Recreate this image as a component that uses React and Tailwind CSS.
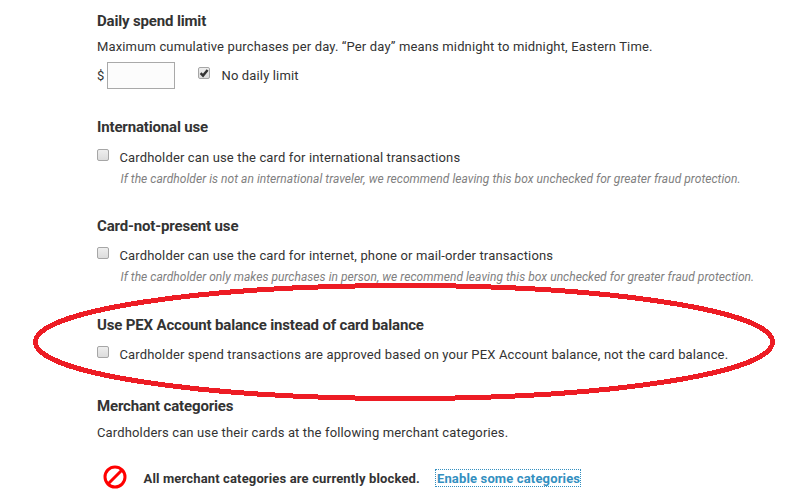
function Heading({ children }) {
  return (
    <h2 className="h-5 text-[15px] leading-5 font-bold tracking-[-0.16px] whitespace-nowrap text-[#333]">
      {children}
    </h2>
  );
}

function Checkbox({ checked = false }) {
  return (
    <span
      role="checkbox"
      aria-checked={checked}
      className="flex h-3 w-3 shrink-0 rounded-[2px] border border-[#a6a6a6] bg-linear-to-b from-[#eeeeee] to-[#dcdcdc]"
    >
      {checked && (
        <svg viewBox="0 0 10 10" className="h-2.5 w-2.5">
          <path d="M1.6 5.2 L4 7.6 L8.6 1.9" fill="none" stroke="#333" strokeWidth="2.4" />
        </svg>
      )}
    </span>
  );
}

function Option({ children, note, className = "" }) {
  return (
    <div className={className}>
      <div className="flex h-5">
        <span className="mt-px">
          <Checkbox />
        </span>
        <span className="ml-[10.5px] leading-5 whitespace-nowrap">{children}</span>
      </div>
      {note && (
        <p className="mt-px ml-[23.5px] h-5 text-[12px] leading-5 tracking-[0.045px] whitespace-nowrap text-[#808080] italic">
          {note}
        </p>
      )}
    </div>
  );
}

export default function App() {
  return (
    <main className="relative h-[503px] w-[790px] overflow-hidden bg-white pt-[11px] pl-[97px] font-['Roboto',sans-serif] text-[13px] tracking-[0.145px] text-[#333]">
      <section>
        <Heading>Daily spend limit</Heading>
        <p className="mt-1.5 h-5 leading-5 whitespace-nowrap">
          Maximum cumulative purchases per day. “Per day” means midnight to midnight, Eastern Time.
        </p>
        <div className="mt-[5px] flex h-[27px]">
          <span className="w-2.5 leading-[27px]">$</span>
          <input aria-label="Daily limit" className="h-[27px] w-[68px] border border-[#a9a9a9] bg-[#fcfcfc]" />
          <span className="mt-[5px] ml-[23px]">
            <Checkbox checked />
          </span>
          <span className="ml-[11.5px] leading-[27px]">No daily limit</span>
        </div>
      </section>
      <section className="mt-7">
        <Heading>International use</Heading>
        <Option
          className="mt-[11px]"
          note="If the cardholder is not an international traveler, we recommend leaving this box unchecked for greater fraud protection."
        >
          Cardholder can use the card for international transactions
        </Option>
      </section>
      <section className="mt-[27px]">
        <Heading>Card-not-present use</Heading>
        <Option
          className="mt-2.5"
          note="If the cardholder only makes purchases in person, we recommend leaving this box unchecked for greater fraud protection."
        >
          Cardholder can use the card for internet, phone or mail-order transactions
        </Option>
      </section>
      <section className="mt-7">
        <Heading>Use PEX Account balance instead of card balance</Heading>
        <Option className="mt-2.5">
          Cardholder spend transactions are approved based on your PEX Account balance, not the card balance.
        </Option>
      </section>
      <section className="mt-[31px]">
        <Heading>Merchant categories</Heading>
        <p className="mt-[7px] h-5 leading-5">Cardholders can use their cards at the following merchant categories.</p>
        <div className="mt-[21px] ml-1.5 flex h-7 items-center font-bold">
          <svg viewBox="0 0 24 24" className="-mt-0.5 h-6 w-6">
            <circle cx="12" cy="12" r="10" fill="none" stroke="#f00" strokeWidth="3" />
            <path d="M5 19 L19 5" stroke="#f00" strokeWidth="3" />
          </svg>
          <span className="mt-0.5 ml-[16.5px] whitespace-nowrap">All merchant categories are currently blocked.</span>
          <a className="ml-[15px] h-[18px] w-[146px] border border-dotted border-[#338fc0] pl-px leading-[17px] tracking-[0.15px] whitespace-nowrap text-[#338fc0]">
            Enable some categories
          </a>
        </div>
      </section>
      <svg viewBox="0 0 790 503" className="pointer-events-none absolute inset-0 h-full w-full" shapeRendering="crispEdges">
        <ellipse cx="404" cy="342" rx="368.5" ry="56.5" fill="none" stroke="#ed1c24" strokeWidth="5" />
      </svg>
    </main>
  );
}
